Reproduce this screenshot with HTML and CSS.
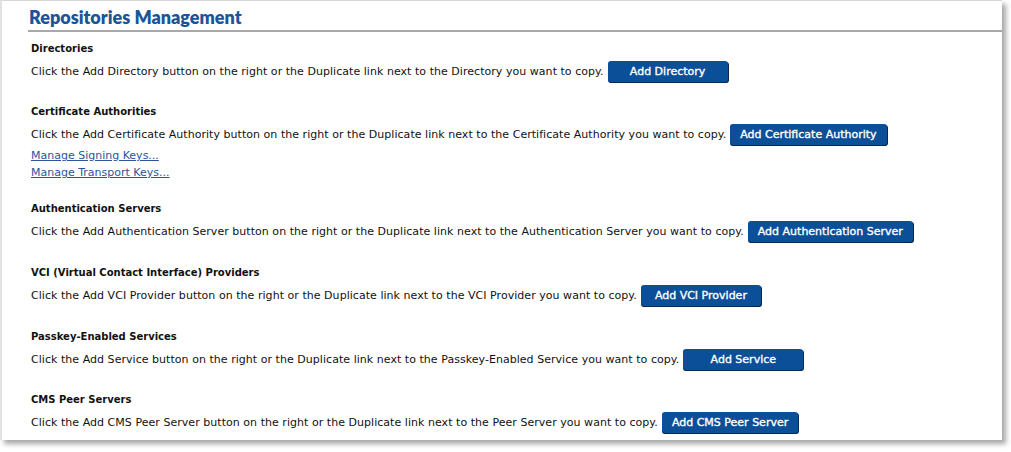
FILE: index.html
```html
<!DOCTYPE html>
<html>
<head>
<meta charset="utf-8">
<link rel="stylesheet" href="styles.css">
</head>
<body>
<div class="panel">
  <h1 class="title">Repositories Management</h1>
  <div class="content">
    <section class="group tight">
      <h2 class="label">Directories</h2>
      <div class="row"><span>Click the Add Directory button on the right or the Duplicate link next to the Directory you want to copy.</span><button class="btn w120">Add Directory</button></div>
    </section>
    <section class="group has-links">
      <h2 class="label">Certificate Authorities</h2>
      <div class="row"><span>Click the Add Certificate Authority button on the right or the Duplicate link next to the Certificate Authority you want to copy.</span><button class="btn">Add Certificate Authority</button></div>
      <a class="link first" href="#">Manage Signing Keys...</a>
      <a class="link" href="#">Manage Transport Keys...</a>
    </section>
    <section class="group">
      <h2 class="label">Authentication Servers</h2>
      <div class="row"><span>Click the Add Authentication Server button on the right or the Duplicate link next to the Authentication Server you want to copy.</span><button class="btn">Add Authentication Server</button></div>
    </section>
    <section class="group">
      <h2 class="label">VCI (Virtual Contact Interface) Providers</h2>
      <div class="row"><span>Click the Add VCI Provider button on the right or the Duplicate link next to the VCI Provider you want to copy.</span><button class="btn w120">Add VCI Provider</button></div>
    </section>
    <section class="group tight">
      <h2 class="label">Passkey-Enabled Services</h2>
      <div class="row"><span>Click the Add Service button on the right or the Duplicate link next to the Passkey-Enabled Service you want to copy.</span><button class="btn w120">Add Service</button></div>
    </section>
    <section class="group">
      <h2 class="label">CMS Peer Servers</h2>
      <div class="row"><span>Click the Add CMS Peer Server button on the right or the Duplicate link next to the Peer Server you want to copy.</span><button class="btn">Add CMS Peer Server</button></div>
    </section>
  </div>
</div>
</body>
</html>
```
FILE: styles.css
```css
html, body {
  margin: 0;
  padding: 0;
  background: #ffffff;
}
body {
  width: 1011px;
  height: 452px;
  overflow: hidden;
  font-family: "DejaVu Sans", Verdana, sans-serif;
  color: #111111;
}
.panel {
  width: 1002px;
  height: 440px;
  background: #ffffff;
  border-top: 1px solid #d6d6d6;
  border-left: 2px solid #e2e2e2;
  box-shadow: 4px 4px 5px rgba(0,0,0,0.35);
  box-sizing: border-box;
  padding: 0 0 0 26px;
  overflow: hidden;
}
.title {
  margin: 0;
  padding: 6px 0 3px 1px;
  font-family: Lato, "Open Sans", sans-serif;
  font-weight: 800;
  font-size: 18px;
  color: #1b5597;
  border-bottom: 2px solid #a8a8a8;
  line-height: 20px;
}
.content {
  padding: 10px 0 0 3px;
}
.group {
  margin-bottom: 24px;
}
.group.tight {
  margin-bottom: 23px;
}
.group.has-links {
  margin-bottom: 21px;
}
.label {
  margin: 0;
  font-size: 10px;
  font-weight: bold;
  line-height: 14px;
  color: #111;
}
.row {
  display: flex;
  align-items: center;
  gap: 4px;
  margin-top: 5px;
  font-size: 11px;
  letter-spacing: 0.04px;
  line-height: 21px;
}
.btn {
  font-family: "DejaVu Sans", Verdana, sans-serif;
  font-size: 11px;
  font-weight: normal;
  letter-spacing: 0;
  -webkit-text-stroke: 0.35px #ffffff;
  color: #ffffff;
  background: #0a4f97;
  border: none;
  border-radius: 3px;
  box-shadow: 0 1px 0 #052a52, 1px 1px 0 #052a52;
  height: 21px;
  padding: 0 10px;
  line-height: 21px;
}
.btn.w120 {
  width: 120px;
  padding: 0;
}
.link {
  display: block;
  font-size: 11px;
  line-height: 17px;
  color: #2a5599;
  text-decoration: underline;
}
.link.first {
  margin-top: 2px;
}
```
